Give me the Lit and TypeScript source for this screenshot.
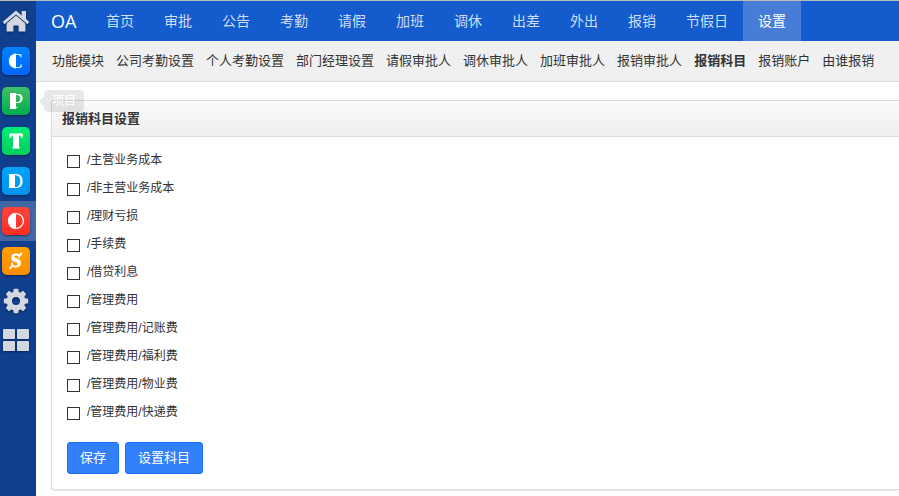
import { LitElement, html, css, svg } from "lit";
import { customElement, state, property } from "lit/decorators.js";
import { classMap } from "lit/directives/class-map.js";

const NAV = ["首页", "审批", "公告", "考勤", "请假", "加班", "调休", "出差", "外出", "报销", "节假日", "设置"];
const SUBNAV = [
  "功能模块", "公司考勤设置", "个人考勤设置", "部门经理设置", "请假审批人", "调休审批人",
  "加班审批人", "报销审批人", "报销科目", "报销账户", "由谁报销",
];
const SUBJECTS = [
  "/主营业务成本", "/非主营业务成本", "/理财亏损", "/手续费", "/借贷利息",
  "/管理费用", "/管理费用/记账费", "/管理费用/福利费", "/管理费用/物业费", "/管理费用/快递费",
];

const teeth = [0, 45, 90, 135, 180, 225, 270, 315];

const glyphs = {
  home: svg`
    <path d="M14 3.6 0.8 14.8 2.4 17.2 14 7.4 25.6 17.2 27.2 14.8 24 12V4H19.6V8.4Z"/>
    <path d="M14 8.6 4.6 16.6V24.4H11.4V18.4H16.6V24.4H23.4V16.6Z"/>`,
  customer: svg`
    <path d="M14 6.2A7.9 7.9 0 0 0 14 21.8Z"/>
    <text x="6" y="21" font-size="22">C</text>`,
  project: svg`
    <rect x="8" y="6" width="6" height="16"/>
    <text x="9" y="21" font-size="22">P</text>`,
  team: svg`
    <rect x="11" y="7" width="6" height="14"/>
    <text x="14" y="21" font-size="21" text-anchor="middle" stroke="#fff" stroke-width="1">T</text>`,
  doc: svg`
    <rect x="7" y="7" width="6" height="14"/>
    <text x="6" y="21" font-size="21">D</text>`,
  office: svg`
    <circle cx="14" cy="14" r="7.4" fill="none" stroke="#fff" stroke-width="1.2"/>
    <path d="M14 6A8 8 0 0 0 14 22Z"/>`,
  money: svg`
    <text x="14" y="20" font-size="19" font-weight="bold" text-anchor="middle" stroke="#fff" stroke-width="0.8">S</text>
    <path d="M17 8Q18 5.5 20.4 5 20.4 7.6 18.4 9.4ZM10.6 19.6Q9 22.6 7 22.4 7 20.2 9.4 18.4Z"/>`,
  gear: svg`
    ${teeth.map((a) => svg`<path d="M11 6 11.8 1.8H16.2L17 6Z" transform="rotate(${a} 14 14)"/>`)}
    <circle cx="14" cy="14" r="6.7" fill="none" stroke="currentColor" stroke-width="5.4"/>`,
  grid: svg`
    <rect x="1" y="2" width="12" height="10" rx="1"/><rect x="15" y="2" width="12" height="10" rx="1"/>
    <rect x="1" y="14" width="12" height="10" rx="1"/><rect x="15" y="14" width="12" height="10" rx="1"/>`,
};

type Glyph = keyof typeof glyphs;
const APPS: { id: Glyph; label: string; tile?: boolean; tip?: boolean }[] = [
  { id: "home", label: "主页" },
  { id: "customer", label: "客户", tile: true },
  { id: "project", label: "项目", tile: true, tip: true },
  { id: "team", label: "团队", tile: true },
  { id: "doc", label: "文档", tile: true },
  { id: "office", label: "办公", tile: true },
  { id: "money", label: "现金", tile: true },
  { id: "gear", label: "后台" },
  { id: "grid", label: "全部应用" },
];

@customElement("app-dock")
export class AppDock extends LitElement {
  @property() current: Glyph = "office";

  static styles = css`
    :host { display: block; width: 36px; flex: none; background: #0f3f8d; }
    a {
      display: flex; align-items: center; height: 40px; padding-left: 2px;
      position: relative; color: #d2d7e0; text-decoration: none;
    }
    a.active { background: #4167a5; }
    svg { display: block; width: 28px; height: 28px; fill: currentColor; font-family: "Liberation Serif", serif; }
    .plain svg { filter: drop-shadow(0 1px 1px rgba(0, 0, 0, 0.4)); }
    .tile { width: 28px; height: 28px; border-radius: 5px; color: #fff; box-shadow: 0 1px 2px rgba(0, 0, 0, 0.45); }
    .customer { background: linear-gradient(#0080ff, #0066ff); }
    .project { background: linear-gradient(#3fbf68, #00ad4e); }
    .team { background: linear-gradient(#00ee76, #00cd5c); }
    .doc { background: linear-gradient(#00a5fa, #0091ee); }
    .office { background: linear-gradient(#ff443c, #ff2d22); }
    .money { background: linear-gradient(#ffa000, #ff8c00); }
    .tip {
      position: absolute; left: 44px; top: 9px; z-index: 2; padding: 0 8px; border-radius: 4px;
      background: rgba(0, 0, 0, 0.09); color: #fff; font-size: 12px; line-height: 22px; white-space: nowrap;
    }
    .tip::before {
      content: ""; position: absolute; left: -5px; top: 6px;
      border: 5px solid transparent; border-left: 0; border-right-color: rgba(0, 0, 0, 0.09);
    }
  `;

  render() {
    return html`<nav aria-label="应用">
      ${APPS.map((app) => html`
        <a href="#${app.id}" aria-label=${app.label} class=${classMap({ active: app.id === this.current, plain: !app.tile })}>
          <span class=${classMap({ tile: !!app.tile, [app.id]: true })}>
            <svg viewBox="0 0 28 28" aria-hidden="true">${glyphs[app.id]}</svg>
          </span>
          ${app.tip ? html`<span class="tip">${app.label}</span>` : ""}
        </a>`)}
    </nav>`;
  }
}

@customElement("app-root")
export class AppRoot extends LitElement {
  @state() private section = "设置";
  @state() private page = "报销科目";

  static styles = css`
    :host {
      display: flex; box-sizing: border-box; min-height: 100vh; overflow: hidden;
      border-top: 1px solid #bbb; background: #fff; color: #333;
      font: 13px/20px "Liberation Sans", "Noto Sans CJK SC", sans-serif;
    }
    .main { flex: 1; min-width: 0; }
    a { text-decoration: none; white-space: nowrap; }
    .bar { display: flex; background: #145ccd; font-size: 14px; line-height: 40px; height: 40px; }
    .bar a { padding: 0 15px; color: #d0def5; }
    .bar .brand { box-sizing: border-box; width: 55px; color: #fff; font-family: "Open Sans", sans-serif; font-size: 18px; }
    .bar .active { background: #487dd7; color: #fff; }
    .sub {
      display: flex; gap: 12px; padding: 0 16px; line-height: 40px; height: 40px;
      background: #f0f0f0; border-bottom: 1px solid #ddd;
    }
    .sub a { color: #333; }
    .sub .active { font-weight: bold; }
    .panel {
      margin: 18px 0 0 15px; border: 1px solid #ddd; border-right: 0;
      border-radius: 4px 0 0 4px; box-shadow: 0 1px 2px rgba(0, 0, 0, 0.1);
    }
    h1 {
      margin: 0; padding: 0 10px; font-size: 13px; line-height: 35px; border-bottom: 1px solid #ddd;
      background: linear-gradient(#fafafa, #efefef); border-radius: 4px 0 0 0;
    }
    form { padding: 9px 15px 15px; }
    ul { list-style: none; margin: 0; padding: 0; }
    label { display: flex; align-items: center; gap: 7px; width: max-content; font-size: 12px; line-height: 28px; }
    input { appearance: none; box-sizing: border-box; width: 13px; height: 13px; margin: 2px 0 0; border: 1px solid #333; background: #fff; }
    input:checked { background: #3280fc; box-shadow: inset 0 0 0 2px #fff; }
    .actions { display: flex; gap: 6px; margin-top: 16px; }
    button {
      font: inherit; color: #fff; background: #3280fc; border: 1px solid #1970fc;
      border-radius: 3px; padding: 5px 12px; cursor: pointer;
    }
  `;

  private link(name: string, current: string, pick: (n: string) => void) {
    return html`<a href="#" class=${classMap({ active: name === current })}
      @click=${(e: Event) => { e.preventDefault(); pick(name); }}>${name}</a>`;
  }

  render() {
    return html`
      <app-dock></app-dock>
      <div class="main">
        <nav class="bar">
          <a class="brand" href="#">OA</a>
          ${NAV.map((n) => this.link(n, this.section, (v) => (this.section = v)))}
        </nav>
        <nav class="sub">${SUBNAV.map((n) => this.link(n, this.page, (v) => (this.page = v)))}</nav>
        <section class="panel">
          <h1>报销科目设置</h1>
          <form @submit=${(e: Event) => e.preventDefault()}>
            <ul>${SUBJECTS.map((s) => html`<li><label><input type="checkbox" name="subject" .value=${s}>${s}</label></li>`)}</ul>
            <div class="actions">
              <button type="submit">保存</button>
              <button type="button">设置科目</button>
            </div>
          </form>
        </section>
      </div>`;
  }
}
